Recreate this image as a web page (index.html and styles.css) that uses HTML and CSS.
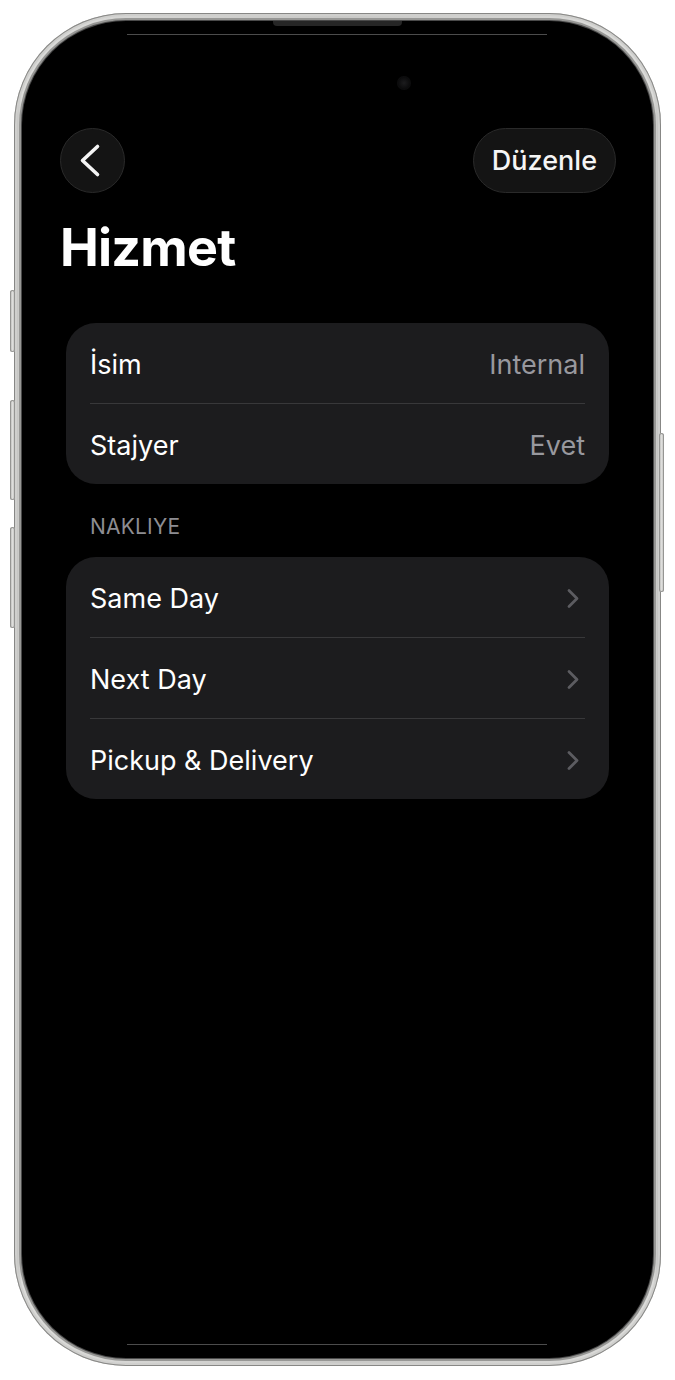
FILE: index.html
```html
<!DOCTYPE html>
<html lang="tr">
<head>
<meta charset="utf-8">
<title>Hizmet</title>
<link rel="stylesheet" href="styles.css">
</head>
<body>
<div class="phone">
  <div class="side-btn action"></div>
  <div class="side-btn vol-up"></div>
  <div class="side-btn vol-down"></div>
  <div class="side-btn power"></div>
  <div class="frame">
    <div class="screen">
      <div class="notch"></div>
      <div class="glint glint-top"></div>
      <div class="camera"></div>
      <div class="content">
        <div class="nav">
          <button class="circle-btn" aria-label="Geri">
            <svg class="back-icon" width="24" height="35" viewBox="0 0 24 35"><path d="M19.5 3.5 L4.5 17.5 L19.5 31.5" fill="none" stroke="#f4f4f4" stroke-width="3.6" stroke-linecap="round" stroke-linejoin="round"/></svg>
          </button>
          <button class="pill-btn">Düzenle</button>
        </div>
        <h1 class="title">Hizmet</h1>
        <div class="group first">
          <div class="row"><span class="label">İsim</span><span class="value">Internal</span></div>
          <div class="row"><span class="label">Stajyer</span><span class="value">Evet</span></div>
        </div>
        <div class="section-label">NAKLIYE</div>
        <div class="group">
          <div class="row"><span class="label">Same Day</span><svg class="chev" width="14" height="21" viewBox="0 0 14 21"><path d="M3 2.5 L11 10.5 L3 18.5" fill="none" stroke="#5c5c61" stroke-width="2.8" stroke-linecap="round" stroke-linejoin="round"/></svg></div>
          <div class="row"><span class="label">Next Day</span><svg class="chev" width="14" height="21" viewBox="0 0 14 21"><path d="M3 2.5 L11 10.5 L3 18.5" fill="none" stroke="#5c5c61" stroke-width="2.8" stroke-linecap="round" stroke-linejoin="round"/></svg></div>
          <div class="row"><span class="label">Pickup &amp; Delivery</span><svg class="chev" width="14" height="21" viewBox="0 0 14 21"><path d="M3 2.5 L11 10.5 L3 18.5" fill="none" stroke="#5c5c61" stroke-width="2.8" stroke-linecap="round" stroke-linejoin="round"/></svg></div>
        </div>
      </div>
      <div class="glint glint-bottom"></div>
    </div>
  </div>
</div>
</body>
</html>
```

FILE: styles.css
```css
html, body {
  margin: 0;
  background: #ffffff;
}
body {
  font-family: "Inter", "Liberation Sans", sans-serif;
  -webkit-font-smoothing: antialiased;
}
.phone {
  position: relative;
  width: 647px;
  height: 1353px;
  margin: 13px 0 0 14px;
}
.frame {
  height: 100%;
  box-sizing: border-box;
  padding: 8px;
  border-radius: 112px;
  background: linear-gradient(90deg, #b4b4b2 0%, #dcdcda 1.2%, #c9c9c7 50%, #dcdcda 98.8%, #b4b4b2 100%);
  box-shadow: inset 0 0 0 1px #878785, inset 0 0 0 3px #cfcfcd;
}
.screen {
  position: relative;
  height: 100%;
  border-radius: 104px;
  background: #000;
  box-shadow: 0 0 0 1px #4a4a4a, 0 0 0 3px #979795;
  overflow: hidden;
}
.side-btn {
  position: absolute;
  width: 5px;
  border-radius: 3px;
  background: linear-gradient(90deg, #b0b0ae, #dededc 50%, #bdbdbb);
  box-shadow: inset 0 0 0 1px #959593;
}
.action { left: -4px; top: 277px; height: 62px; }
.vol-up { left: -4px; top: 387px; height: 100px; }
.vol-down { left: -4px; top: 514px; height: 101px; }
.power { right: -3px; top: 420px; height: 159px; }
.notch {
  position: absolute;
  top: 0;
  left: 251px;
  width: 129px;
  height: 5px;
  background: #262626;
  border-radius: 0 0 4px 4px;
}
.glint {
  position: absolute;
  left: 105px;
  width: 420px;
  height: 1px;
  background: #4c4c4c;
}
.glint-top { top: 13px; }
.glint-bottom { bottom: 13px; }
.camera {
  position: absolute;
  left: 375px;
  top: 55px;
  width: 14px;
  height: 14px;
  border-radius: 50%;
  background: radial-gradient(circle, #1c1c1e 0%, #0b0b0c 60%, #161618 100%);
}
.content {
  padding: 107px 37px 0 38px;
}
.nav {
  display: flex;
  justify-content: space-between;
  align-items: center;
}
.circle-btn {
  width: 65px;
  height: 65px;
  box-sizing: border-box;
  border-radius: 50%;
  background: #141414;
  border: 1px solid #2a2a2a;
  padding: 0;
  display: flex;
  align-items: center;
  justify-content: center;
}
.back-icon {
  margin-right: 6px;
}
.pill-btn {
  height: 65px;
  box-sizing: border-box;
  padding: 0 18px;
  border-radius: 33px;
  background: #141414;
  border: 1px solid #2a2a2a;
  color: #f5f5f5;
  font-family: "Inter", "Liberation Sans", sans-serif;
  font-weight: 500;
  font-size: 27px;
}
.title {
  margin: 22px 0 0;
  font-size: 52px;
  font-weight: 700;
  line-height: 65px;
  color: #ffffff;
  letter-spacing: -0.8px;
}
.group {
  margin: 0 7px 0 6px;
  padding: 0 24px;
  background: #1c1c1e;
  border-radius: 30px;
}
.group.first {
  margin-top: 43px;
}
.row {
  display: flex;
  align-items: center;
  justify-content: space-between;
  height: 80px;
  padding-top: 3px;
  box-sizing: border-box;
  font-size: 27px;
  color: #ffffff;
}
.row + .row {
  height: 81px;
  border-top: 1px solid #38383a;
}
.value {
  color: #98989e;
}
.chev {
  margin-right: 5px;
}
.section-label {
  margin: 30px 0 17px 30px;
  font-size: 21px;
  line-height: 26px;
  color: #8d8d92;
  letter-spacing: 0.2px;
}
```
